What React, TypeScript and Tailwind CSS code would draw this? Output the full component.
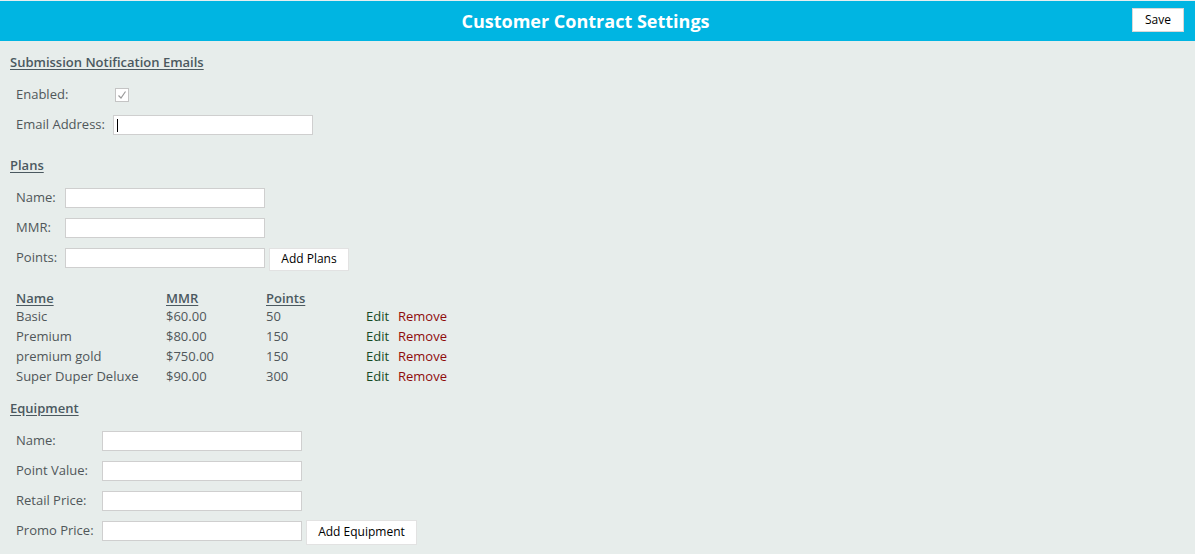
import React from "react";

const font = { fontFamily: '"Open Sans", "Noto Sans", sans-serif' };

function Input({ caret = false }: { caret?: boolean }) {
  return (
    <div className="relative h-[20px] w-[200px] border border-[#cfcfcf] bg-white">
      {caret && <span className="absolute left-[3px] top-[3px] h-[13px] w-px bg-black" />}
    </div>
  );
}

function Heading({ children, className = "" }: { children: React.ReactNode; className?: string }) {
  return (
    <div className={`flex h-[20px] items-center text-[13px] font-semibold text-[#4b5960] underline underline-offset-2 ${className}`}>
      {children}
    </div>
  );
}

function Row({ label, labelWidth, children }: { label: string; labelWidth: string; children: React.ReactNode }) {
  return (
    <div className="flex h-[30px] items-center pl-[6px]">
      <span className={`${labelWidth} shrink-0 text-[13px] text-[#50575a]`}>{label}</span>
      {children}
    </div>
  );
}

const plans = [
  { name: "Basic", mmr: "$60.00", points: "50" },
  { name: "Premium", mmr: "$80.00", points: "150" },
  { name: "premium gold", mmr: "$750.00", points: "150" },
  { name: "Super Duper Deluxe", mmr: "$90.00", points: "300" },
];

export default function App() {
  return (
    <div className="min-h-[554px] w-full bg-[#e7edeb]" style={font}>
      <div className="border-t border-[#e6eef0] bg-[#00b5e2]">
        <div className="relative flex h-[40px] items-center justify-center pr-[24px]">
          <h1 className="text-[18px] font-bold text-white">Customer Contract Settings</h1>
          <button className="absolute right-[11px] top-[7px] h-[24px] w-[52px] border border-[#d8d8d8] bg-white text-[12px] text-black">
            Save
          </button>
        </div>
      </div>

      <div className="pl-[10px]">
        <Heading className="mt-[12px]">Submission Notification Emails</Heading>
        <div className="mt-[7px]">
          <Row label="Enabled:" labelWidth="w-[99px]">
            <div className="flex h-[14px] w-[14px] items-center justify-center border border-[#c4c4c4] bg-white">
              <svg width="10" height="10" viewBox="0 0 10 10" fill="none">
                <path d="M1.5 5.5 L4 8 L8.5 1.5" stroke="#9a9a9a" strokeWidth="1.2" />
              </svg>
            </div>
          </Row>
          <Row label="Email Address:" labelWidth="w-[97px]">
            <Input caret />
          </Row>
        </div>

        <Heading className="mt-[16px]">Plans</Heading>
        <div className="mt-[7px]">
          <Row label="Name:" labelWidth="w-[49px]">
            <Input />
          </Row>
          <Row label="MMR:" labelWidth="w-[49px]">
            <Input />
          </Row>
          <Row label="Points:" labelWidth="w-[49px]">
            <Input />
            <button className="ml-[4px] mt-[2px] h-[23px] w-[80px] border border-[#e2e2e2] bg-white text-[12px] text-black">
              Add Plans
            </button>
          </Row>
        </div>

        <div className="mt-[17px] pl-[6px] text-[13px] text-[#50575a]">
          <div className="flex h-[17px] items-center font-semibold text-[#4b5960]">
            <span className="w-[150px] underline underline-offset-2">Name</span>
            <span className="w-[100px] underline underline-offset-2">MMR</span>
            <span className="w-[100px] underline underline-offset-2">Points</span>
          </div>
          {plans.map((p) => (
            <div key={p.name} className="flex h-[20px] items-center">
              <span className="w-[150px]">{p.name}</span>
              <span className="w-[100px]">{p.mmr}</span>
              <span className="w-[100px]">{p.points}</span>
              <span className="w-[32px] text-[#164a24]">Edit</span>
              <span className="text-[#8e0b0b]">Remove</span>
            </div>
          ))}
        </div>

        <Heading className="mt-[12px]">Equipment</Heading>
        <div className="mt-[7px]">
          <Row label="Name:" labelWidth="w-[86px]">
            <Input />
          </Row>
          <Row label="Point Value:" labelWidth="w-[86px]">
            <Input />
          </Row>
          <Row label="Retail Price:" labelWidth="w-[86px]">
            <Input />
          </Row>
          <Row label="Promo Price:" labelWidth="w-[86px]">
            <Input />
            <button className="ml-[4px] mt-[2px] h-[25px] w-[111px] border border-[#e2e2e2] bg-white text-[12px] text-black">
              Add Equipment
            </button>
          </Row>
        </div>
      </div>
    </div>
  );
}
